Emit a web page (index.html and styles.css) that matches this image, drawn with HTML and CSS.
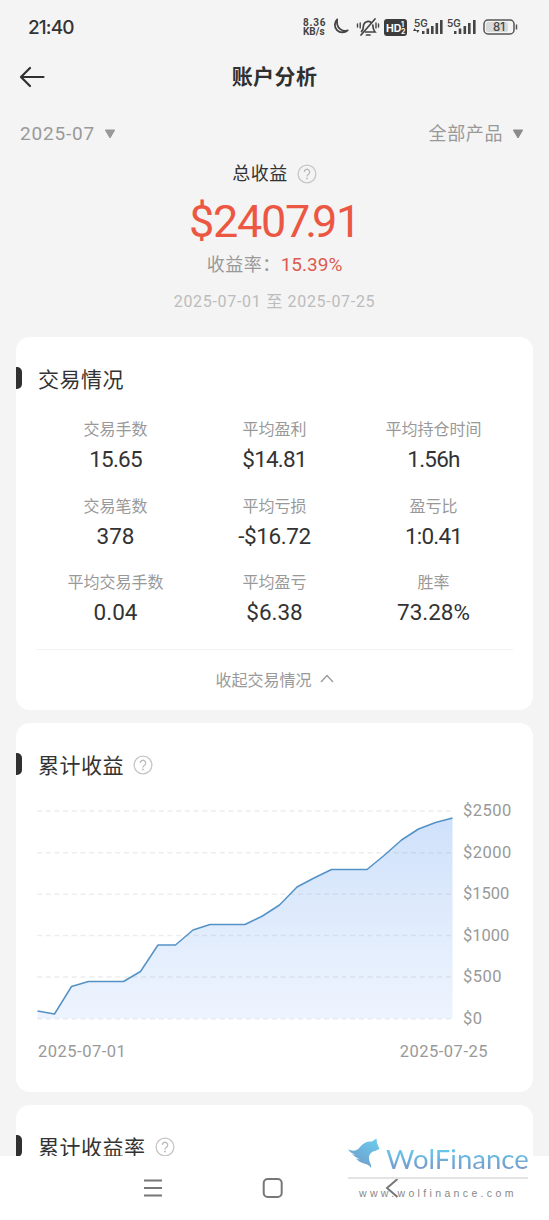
FILE: index.html
```html
<!DOCTYPE html>
<html lang="zh-CN">
<head>
<meta charset="utf-8">
<title>账户分析</title>
<link rel="stylesheet" href="styles.css">
</head>
<body>
<div class="screen">
  <header class="status">
    <span class="clock">21:40</span>
    <div class="status-icons">
      <div class="speed"><span>8.36</span><span>KB/s</span></div>
      <svg class="ic-moon" width="18" height="18" viewBox="0 0 18 18"><path d="M6.200 1.300A7.600 7.600 0 1 0 16.700 12.300C12.500 14.500 4.500 10.500 6.200 1.300Z" fill="none" stroke="#444" stroke-width="1.800" stroke-linejoin="round"/></svg>
      <svg class="ic-bell" width="24" height="20" viewBox="0 0 24 20"><g fill="none" stroke="#444" stroke-width="1.700" stroke-linecap="round"><path d="M5.500 14.500c2-1.700 1.700-3.200 1.900-5.500a4.700 4.700 0 0 1 7.600-3.500"/><path d="M16.800 8c.1 3 .3 4.800 2.200 7H9.500"/><path d="M10.500 18h3.500M5 18L19 2"/><path d="M4.200 6v5M1.500 7v3M20 6v5M22.500 7v3" stroke-width="1.400"/></g></svg>
      <svg class="ic-hd" width="23" height="17" viewBox="0 0 23 17"><rect width="23" height="17" rx="3" fill="#3c3c3c"/><text x="2" y="12.500" class="hd-text">HD</text><text x="17" y="8" class="hd-num">1</text><text x="17" y="15" class="hd-num">2</text></svg>
      <svg class="ic-signal" width="31" height="18" viewBox="0 0 31 18"><text x="1" y="8.500" class="gen">5G</text><g fill="#444"><path d="M0 13l1.700-3 1.700 3zM3 12l1.700 3 1.700-3z"/><rect x="9" y="13" width="2.500" height="3"/><rect x="13.500" y="10.500" width="2.600" height="5.500"/><rect x="18" y="8" width="2.600" height="8"/><rect x="22.500" y="5" width="2.600" height="11"/><rect x="27" y="2" width="2.600" height="14"/></g></svg>
      <svg class="ic-signal-b" width="31" height="18" viewBox="0 0 31 18"><text x="0" y="8.500" class="gen">5G</text><g fill="#444"><rect x="7" y="13" width="2.500" height="3"/><rect x="11.700" y="10.500" width="2.600" height="5.500"/><rect x="16.500" y="8" width="2.600" height="8"/><rect x="21" y="5" width="2.600" height="11"/><rect x="26" y="2" width="2.600" height="14"/></g></svg>
      <svg class="ic-battery" width="36" height="16" viewBox="0 0 36 16"><rect x="1" y="1" width="30" height="14" rx="4" fill="#f4f4f4" stroke="#555" stroke-width="1.500"/><rect x="3" y="3" width="22" height="10" rx="2" fill="#d9d9d9"/><path d="M33.500 5.500v5" stroke="#555" stroke-width="1.500"/><text x="16" y="12" text-anchor="middle" class="charge">81</text></svg>
    </div>
  </header>

  <nav class="titlebar">
    <svg class="back" width="26" height="22" viewBox="0 0 26 22"><path d="M11 2L2 11l9 9M2.500 11H24.500" fill="none" stroke="#303030" stroke-width="2.200" stroke-linecap="round" stroke-linejoin="round"/></svg>
    <h1>账户分析</h1>
  </nav>

  <div class="filters">
    <span class="filter"><span class="month">2025-07</span><svg width="12" height="10" viewBox="0 0 12 10"><path d="M1.300 1h9.400L6 9z" fill="#999" stroke="#999" stroke-linejoin="round"/></svg></span>
    <span class="filter"><span class="product">全部产品</span><svg width="12" height="10" viewBox="0 0 12 10"><path d="M1.300 1h9.400L6 9z" fill="#8b8b8b" stroke="#8b8b8b" stroke-linejoin="round"/></svg></span>
  </div>

  <section class="summary">
    <div class="sum-title"><span>总收益</span><svg width="20" height="20" viewBox="0 0 20 20"><use href="#help"/></svg></div>
    <div class="sum-total">$240<span class="kern">7.</span>91</div>
    <div class="sum-rate"><span>收益率：</span><b>15.39%</b></div>
    <div class="sum-range">2025-07-01 至 2025-07-25</div>
  </section>

  <main class="cards">
    <section class="card trading">
      <h2>交易情况</h2>
      <div class="stats">
        <div class="stat"><span>交易手数</span><b class="tight">15.65</b></div>
        <div class="stat"><span>平均盈利</span><b class="tight">$14.81</b></div>
        <div class="stat"><span>平均持仓时间</span><b class="tight">1.56h</b></div>
        <div class="stat"><span>交易笔数</span><b>378</b></div>
        <div class="stat"><span>平均亏损</span><b class="snug">-$16.72</b></div>
        <div class="stat"><span>盈亏比</span><b class="tight">1:0.41</b></div>
        <div class="stat"><span>平均交易手数</span><b>0.04</b></div>
        <div class="stat"><span>平均盈亏</span><b>$6.38</b></div>
        <div class="stat"><span>胜率</span><b>73.28%</b></div>
      </div>
      <div class="collapse"><span>收起交易情况</span><svg width="14" height="9" viewBox="0 0 14 9"><path d="M1 8L7 1.500l6 6.500" fill="none" stroke="#999" stroke-width="1.300"/></svg></div>
    </section>

    <section class="card profit">
      <h2>累计收益<svg width="20" height="20" viewBox="0 0 20 20"><use href="#help"/></svg></h2>
      <div class="chart">
        <svg class="plot" width="416" height="212" viewBox="0 0 416 212">
          <defs>
            <linearGradient id="area" x1="0" y1="0" x2="0" y2="1"><stop offset="0" stop-color="#cfe1fb"/><stop offset=".5" stop-color="#dfebfc"/><stop offset="1" stop-color="#eef4fe"/></linearGradient>
          </defs>
          <path d="M.5 203L17.500 206 34.500 178.500 51.500 173.500H86.500L103.500 163.500 121 137H138.500L156 122 173 116.500H208L225.500 108 242.500 97 260 79 277 70 294.500 61.500H330L347 47.500 364.500 32 381.500 21 398.500 14.500 415.500 10V210.500H.5Z" fill="url(#area)"/>
          <path d="M0 3H416M0 44.700H416M0 86.200H416M0 127.500H416M0 169H416M0 210.700H416" stroke="#a5a5a5" stroke-opacity=".2" stroke-width="1.400" stroke-dasharray="5 3.700"/>
          <path d="M.5 203L17.500 206 34.500 178.500 51.500 173.500H86.500L103.500 163.500 121 137H138.500L156 122 173 116.500H208L225.500 108 242.500 97 260 79 277 70 294.500 61.500H330L347 47.500 364.500 32 381.500 21 398.500 14.500 415.500 10" fill="none" stroke="#5492c6" stroke-width="1.500" stroke-linejoin="round"/>
        </svg>
        <div class="y-axis"><span>$2500</span><span>$2000</span><span class="narrow">$1500</span><span class="narrow">$1000</span><span>$500</span><span>$0</span></div>
      </div>
      <div class="x-axis"><span>2025-07-01</span><span>2025-07-25</span></div>
    </section>

    <section class="card rate">
      <h2>累计收益率<svg width="20" height="20" viewBox="0 0 20 20"><use href="#help"/></svg></h2>
    </section>
  </main>

  <footer class="navbar">
    <svg width="20" height="18" viewBox="0 0 20 18"><path d="M1 1.500H19M1 9H19M1 16.500H19" stroke="#777" stroke-width="2"/></svg>
    <svg width="22" height="22" viewBox="0 0 22 22"><rect x="1.700" y="2" width="18" height="18" rx="4" fill="none" stroke="#777" stroke-width="2"/></svg>
    <svg class="nav-back" width="14" height="20" viewBox="0 0 14 20"><path d="M12.500 1L2 10l10.500 9" fill="none" stroke="#777" stroke-width="2"/></svg>
  </footer>

  <aside class="watermark">
    <div class="brand">
      <svg width="32" height="32" viewBox="0 0 32 32"><defs><linearGradient id="wolf" x1="1" y1="0" x2=".4" y2="1"><stop offset="0" stop-color="#6ccdf0"/><stop offset="1" stop-color="#6f9fcb"/></linearGradient></defs><path d="M0 11.500C5 13.500 9 13 12 9C15 5 19 3 24 3.500L28.500 .5L29 5L31.500 11L27 13C23 13.500 20.500 17 21 21C21.500 25 23.500 26 23 30C21.500 27.500 20 26.500 16 25.500C12 24.500 10 22.500 8 20.500L12 21.500C9 20 6 18 4 16L8 17C4 15.500 2 14 0 11.500Z" fill="url(#wolf)"/></svg>
      <span>WolFinance</span>
    </div>
    <div class="site">www.wolfinance.com</div>
  </aside>
</div>
<svg width="0" height="0" class="symbols"><symbol id="help" viewBox="0 0 20 20"><circle cx="10" cy="10" r="8.900" fill="none" stroke="#c6c6c6" stroke-width="1.300"/><path d="M7.300 8A2.700 2.700 0 1 1 11.500 10.200C10.300 11 10 11.300 10 12.400" fill="none" stroke="#bbb" stroke-width="1.300"/><circle cx="10" cy="14.500" r=".9" fill="#bbb"/></symbol></svg>
</body>
</html>
```
FILE: styles.css
```css
* { box-sizing: border-box; }
body { margin: 0; background: #f4f4f4; color: #333; font-family: Roboto, "Noto Sans CJK SC", sans-serif; }
svg { display: block; flex: none; }
h1, h2 { margin: 0; font-weight: 400; }
b { font-weight: 400; }
.symbols { position: absolute; }
.screen { position: relative; width: 549px; height: 1220px; overflow: hidden; display: flex; flex-direction: column; }

.status { height: 52px; flex: none; display: flex; align-items: center; justify-content: space-between; padding: 2px 30px 0 28px; }
.clock { font: 500 19px/24px Inter, sans-serif; letter-spacing: -.9px; padding-top: 1px; }
.status-icons { display: flex; align-items: center; }
.speed { display: flex; flex-direction: column; width: 24px; font: 700 10px/9px Roboto, sans-serif; white-space: nowrap; color: #444; }
.speed span { height: 9px; }
.speed span:first-child { letter-spacing: .8px; }
.ic-moon { margin-left: 4px; }
.ic-bell { margin-left: 7px; }
.ic-hd { margin-left: 4px; }
.ic-signal { margin-left: 6px; }
.ic-signal-b { margin-left: 3px; }
.ic-battery { margin-left: 5px; }
.hd-text { font: 700 10.5px Inter, sans-serif; fill: #fff; }
.hd-num { font: 700 7px Inter, sans-serif; fill: #fff; }
.gen { font: 600 10px Inter, sans-serif; fill: #444; }
.charge { font: 500 11.5px Inter, sans-serif; fill: #444; }

.titlebar { height: 50px; flex: none; display: grid; grid-template-columns: 80px 1fr 80px; align-items: center; }
.back { margin-left: 19px; }
.titlebar h1 { text-align: center; font-size: 21px; line-height: 30px; font-weight: 700; letter-spacing: .4px; color: #303030; }

.filters { height: 58px; flex: none; display: flex; justify-content: space-between; align-items: center; padding: 6px 25px 0 20px; color: #999; font-size: 18px; line-height: 26px; }
.filter { display: flex; align-items: center; gap: 9px; }
.month { font-size: 19px; letter-spacing: .8px; }
.product { letter-spacing: .6px; }

.summary { flex: none; height: 177px; display: flex; flex-direction: column; align-items: center; padding-top: 1px; }
.sum-title { display: flex; align-items: center; gap: 9px; font-size: 18px; line-height: 26px; letter-spacing: .5px; }
.sum-total { height: 65px; font-size: 45px; line-height: 70px; color: #ec5743; letter-spacing: -1.300px; }
.kern { letter-spacing: -5px; }
.sum-rate { display: flex; height: 28px; font-size: 18px; line-height: 26px; color: #999; letter-spacing: .5px; }
.sum-rate b { color: #dc5a50; font-size: 19px; letter-spacing: 0; }
.sum-range { margin-top: 10px; font-size: 16px; line-height: 24px; color: #bcbcbc; letter-spacing: .7px; }

.cards { padding: 0 16px; display: flex; flex-direction: column; gap: 13px; }
.card { flex: none; background: #fff; border-radius: 14px; overflow: hidden; padding: 0 20px; }
.trading { height: 373px; }
.profit { height: 369px; }
.rate { height: 130px; }
.card h2 { position: relative; display: flex; align-items: center; gap: 9px; margin-left: 2px; height: 82px; padding-bottom: 1px; font-size: 21px; letter-spacing: .5px; }
.card h2 svg { position: relative; top: 1px; }
.card h2::before { content: ""; position: absolute; left: -22px; top: 30px; width: 6px; height: 22px; background: #303030; border-radius: 0 5px 5px 0; }

.stats { display: grid; grid-template-columns: repeat(3, 1fr); grid-auto-rows: 76.500px; margin: -2px 0 0; }
.stat { display: flex; flex-direction: column; align-items: center; }
.stat span { font-size: 16px; line-height: 26px; color: #999; white-space: nowrap; }
.stat b { font-size: 22.500px; line-height: 33px; }
.stat .tight { letter-spacing: -.8px; }
.stat .snug { letter-spacing: -.4px; }
.collapse { display: flex; align-items: center; justify-content: center; gap: 8px; margin-top: 2px; height: 60px; padding-bottom: 1px; border-top: 1px solid #f3f3f3; color: #999; font-size: 16px; }

.chart { display: flex; margin: 3px 0 0 1px; height: 220px; }
.y-axis { display: flex; flex-direction: column; margin: -8px 0 0 10px; color: #999; font-size: 16.500px; letter-spacing: .5px; }
.y-axis span { flex: none; height: 41.600px; line-height: 22px; }
.y-axis .narrow { letter-spacing: 0; }
.x-axis { display: flex; justify-content: space-between; margin: 12px 25px 0 2px; color: #999; font-size: 16.500px; line-height: 24px; letter-spacing: .5px; }

.navbar { position: absolute; left: 0; top: 1156px; width: 549px; height: 64px; background: #fff; display: flex; align-items: center; gap: 99px; padding-left: 143px; }
.nav-back { margin-left: 2px; }
.watermark { position: absolute; left: 330px; top: 1120px; width: 203px; height: 100px; padding-left: 18px; }
.brand { display: flex; margin-top: 18px; gap: 6px; height: 41px; width: 180px; border-bottom: 2px solid #e3e3e5; }
.brand span { font: 400 27.500px/42px Lato, sans-serif; white-space: nowrap; background: linear-gradient(#65c8ec 30%, #769dcb 75%); background-clip: text; -webkit-background-clip: text; color: transparent; }
.site { margin: 6px 0 0 11px; font: 10.500px/16px "Liberation Sans", sans-serif; letter-spacing: 3.350px; color: #888; white-space: nowrap; }
```
